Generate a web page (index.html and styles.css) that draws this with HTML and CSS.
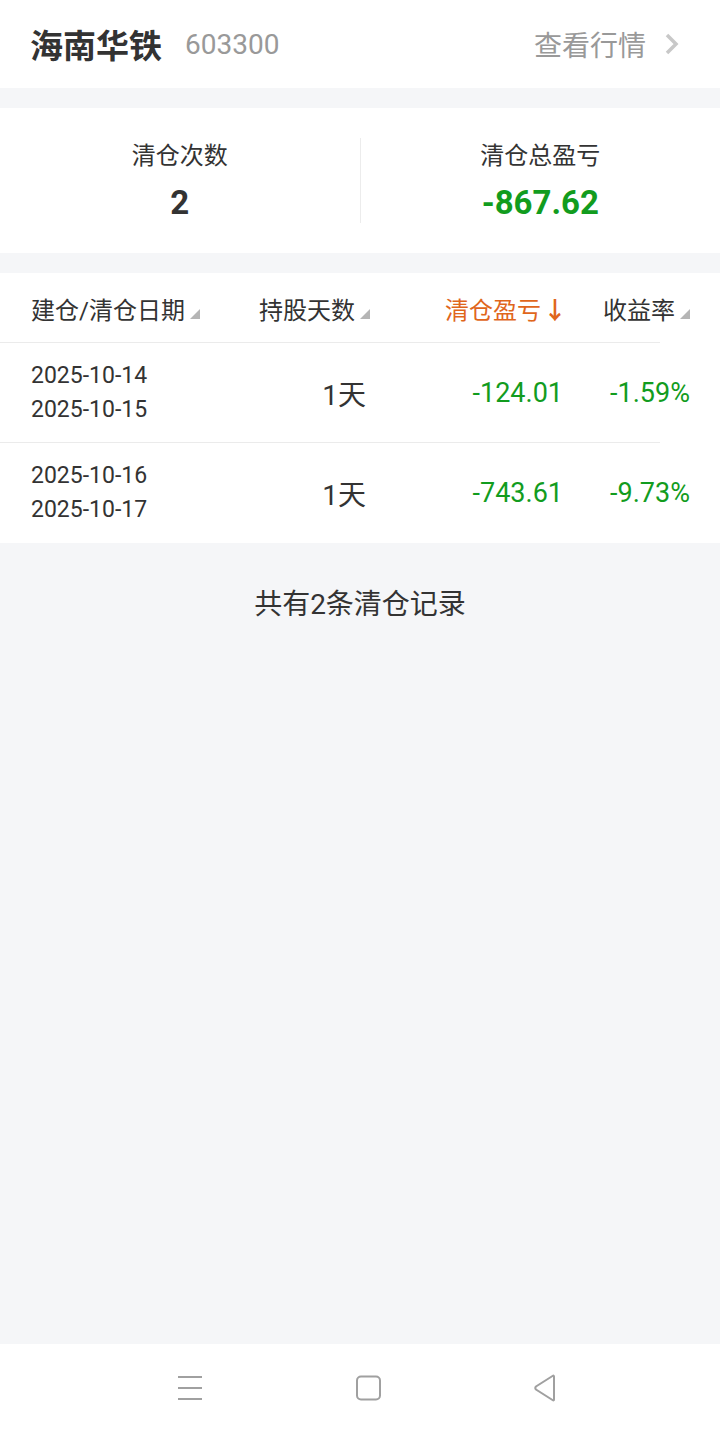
FILE: index.html
```html
<!DOCTYPE html>
<html>
<head>
    <meta charset="utf-8">
    <title>清仓记录</title>
    <link rel="stylesheet" href="styles.css">
</head>
<body>
    <div class="header">
        <div class="stock">
            <span class="stock-name">海南华铁</span>
            <span class="stock-code">603300</span>
        </div>
        <div class="quote-link">
            查看行情
            <svg class="chevron" width="16" height="24" viewBox="0 0 16 24">
                <path d="M3 3 L12 12 L3 21" fill="none" stroke="#c8c8c8" stroke-width="3.5"/>
            </svg>
        </div>
    </div>

    <div class="summary">
        <div class="summary-cell">
            <div class="summary-label">清仓次数</div>
            <div class="summary-value">2</div>
        </div>
        <div class="summary-cell">
            <div class="summary-label">清仓总盈亏</div>
            <div class="summary-value down">-867.62</div>
        </div>
    </div>

    <div class="records">
        <div class="row head">
            <div class="cell left">建仓/清仓日期<span class="sort"></span></div>
            <div class="cell">持股天数<span class="sort"></span></div>
            <div class="cell active">清仓盈亏<span class="arrow">↓</span></div>
            <div class="cell">收益率<span class="sort"></span></div>
        </div>
        <div class="row">
            <div class="cell left dates"><div>2025-10-14</div><div>2025-10-15</div></div>
            <div class="cell days">1天</div>
            <div class="cell num down">-124.01</div>
            <div class="cell num down">-1.59%</div>
        </div>
        <div class="row last">
            <div class="cell left dates"><div>2025-10-16</div><div>2025-10-17</div></div>
            <div class="cell days">1天</div>
            <div class="cell num down">-743.61</div>
            <div class="cell num down">-9.73%</div>
        </div>
    </div>

    <div class="total-note">共有2条清仓记录</div>

    <div class="spacer"></div>

    <div class="navbar">
        <svg width="30" height="30" viewBox="0 0 30 30">
            <path d="M3 4 H27 M3 15 H27 M3 26 H27" stroke="#a0a0a0" stroke-width="2"/>
        </svg>
        <svg width="30" height="30" viewBox="0 0 30 30">
            <rect x="4" y="3.5" width="23" height="23" rx="4" fill="none" stroke="#a0a0a0" stroke-width="2"/>
        </svg>
        <svg width="30" height="30" viewBox="0 0 30 30">
            <path d="M23 3.5 L23 26.5 Q23 28 21.5 27 L5 16.5 Q3.5 15 5 13.5 L21.5 3 Q23 2 23 3.5 Z" fill="none" stroke="#a0a0a0" stroke-width="2"/>
        </svg>
    </div>
</body>
</html>
```

FILE: styles.css
```css
html, body {
    margin: 0;
    padding: 0;
}
body {
    font-family: Roboto, "Noto Sans CJK SC", sans-serif;
    background: #f5f6f8;
    color: #333;
    min-height: 100vh;
    display: flex;
    flex-direction: column;
}
.header {
    height: 88px;
    background: #fff;
    display: flex;
    align-items: center;
    justify-content: space-between;
    padding: 0 40px 0 30px;
}
.stock {
    display: flex;
    align-items: center;
}
.stock-name {
    font-size: 33px;
    font-weight: bold;
    color: #333;
}
.stock-code {
    font-size: 28px;
    color: #999;
    margin-left: 23px;
}
.quote-link {
    display: flex;
    align-items: center;
    font-size: 28px;
    color: #999;
}
.chevron {
    margin-left: 18px;
}
.summary {
    margin-top: 20px;
    height: 145px;
    background: #fff;
    display: flex;
    align-items: center;
}
.summary-cell {
    flex: 1;
    height: 85px;
    text-align: center;
}
.summary-cell + .summary-cell {
    border-left: 1px solid #ececec;
}
.summary-label {
    font-size: 24px;
    line-height: 32px;
    margin-top: 2px;
    color: #333;
}
.summary-value {
    font-size: 33px;
    font-weight: bold;
    line-height: 40px;
    margin-top: 11px;
    color: #333;
}
.down {
    color: #129c1e;
}
.records {
    margin-top: 20px;
    background: #fff;
}
.row {
    display: grid;
    grid-template-columns: 200px 139px 197px 123px;
    padding: 0 30px 0 31px;
    height: 100px;
    align-items: center;
    background: linear-gradient(#ebebeb, #ebebeb) left bottom / 660px 1px no-repeat;
}
.row.head {
    height: 70px;
    font-size: 24px;
    color: #333;
}
.row.last {
    background: none;
}
.cell {
    text-align: right;
    white-space: nowrap;
}
.cell.left {
    text-align: left;
}
.sort {
    display: inline-block;
    width: 0;
    height: 0;
    border-left: 10px solid transparent;
    border-bottom: 10px solid #b5b5b5;
    margin-left: 5px;
}
.active {
    color: #e0661c;
}
.arrow {
    font-weight: bold;
    margin-left: 2px;
}
.dates {
    font-size: 23px;
    line-height: 34px;
    color: #333;
}
.days {
    font-size: 28px;
    color: #333;
    padding-right: 4px;
}
.num {
    font-size: 27px;
}
.row .num:nth-child(3) {
    padding-right: 4px;
}
.total-note {
    text-align: center;
    font-size: 28px;
    color: #333;
    padding-top: 39px;
}
.spacer {
    flex: 1;
}
.navbar {
    height: 88px;
    background: #fff;
    display: flex;
    align-items: center;
    justify-content: center;
    gap: 148px;
    padding-left: 16px;
}
```
